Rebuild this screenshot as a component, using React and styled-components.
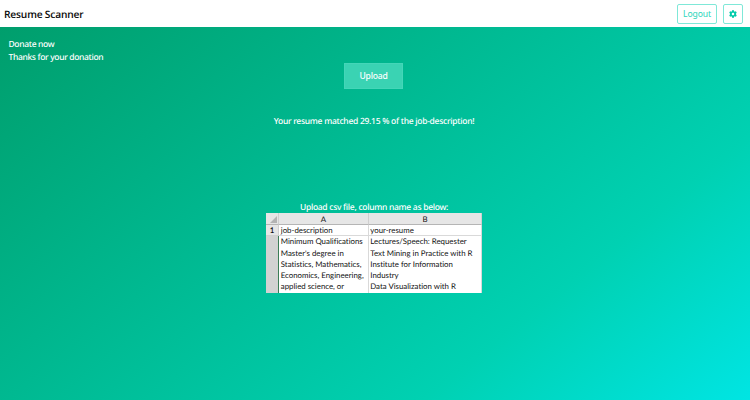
import React from "react";
import styled, { createGlobalStyle } from "styled-components";
import { FaCog } from "react-icons/fa";

const GlobalStyle = createGlobalStyle`
  * { box-sizing: border-box; }
  html, body { margin: 0; overflow: hidden; }
  body {
    font-family: "Noto Sans", "Open Sans", sans-serif;
    text-rendering: geometricPrecision;
  }
`;

const Page = styled.div`
  display: flex;
  flex-direction: column;
  width: 750px;
  height: 400px;
`;

const Navbar = styled.header`
  display: flex;
  align-items: center;
  justify-content: space-between;
  height: 27px;
  padding: 0 7px 0 4px;
  background: #fff;
`;

const Brand = styled.h1`
  margin: 1px 0 0;
  font-family: "Open Sans", sans-serif;
  font-size: 10.2px;
  line-height: 14px;
  font-weight: 600;
  letter-spacing: -0.17px;
  color: #0a0a0a;
`;

const Actions = styled.div`
  display: flex;
  gap: 6px;
`;

const OutlineButton = styled.button`
  display: flex;
  align-items: center;
  justify-content: center;
  width: ${(p) => p.$width}px;
  height: 20px;
  padding: 0;
  border: 1px solid #7fe8d8;
  border-radius: 2px;
  background: #fff;
  color: #2dd5bb;
  font: 400 8.6px/12px "Noto Sans", sans-serif;
  letter-spacing: -0.1px;
`;

const Hero = styled.main`
  flex: 1;
  display: flex;
  flex-direction: column;
  align-items: center;
  padding: 12px 2px 0 0;
  background: linear-gradient(141deg, #009e6c 0%, #00d1b2 73%, #00e5e3 100%);
  color: #fff;
`;

const Donation = styled.div`
  align-self: flex-start;
  margin: 0 0 -1px 8.5px;
`;

const Text = styled.p`
  margin: 0;
  font-size: 8.5px;
  font-weight: 500;
  line-height: 12.6px;
  letter-spacing: ${(p) => p.$tracking ?? -0.34}px;
  white-space: nowrap;
`;

const UploadButton = styled.button`
  width: 59px;
  height: 26px;
  margin: 0 1px 27px 0;
  padding: 0;
  border: 1px solid #44d6b8;
  background: #3ad3b3;
  color: #fff;
  font: 500 8.6px/12px "Noto Sans", sans-serif;
  letter-spacing: -0.24px;
`;

const Sample = styled.section`
  display: flex;
  flex-direction: column;
  align-items: center;
  margin-top: 73px;
`;

const Sheet = styled.div`
  display: grid;
  grid-template-columns: 13.5px 89.5px 113.5px;
  grid-template-rows: 12px 11px 57px;
  width: 216.5px;
  margin-top: -1px;
  background: #fff;
  color: #111;
  font-family: Lato, sans-serif;
  font-size: 7.85px;
  line-height: 11.6px;
  font-variant-ligatures: none;
`;

const HeaderCell = styled.div`
  display: flex;
  align-items: center;
  justify-content: center;
  padding-top: 1px;
  background: #e6e6e6;
  border-right: 1px solid #cfcfcf;
  border-bottom: 1px solid #b5b5b5;
`;

const Corner = styled(HeaderCell)`
  align-items: flex-end;
  justify-content: flex-end;
  padding: 0 1px 1px 0;
`;

const RowNumber = styled(HeaderCell)`
  font-weight: 600;
  border-bottom-color: #cfcfcf;
`;

const SelectedRow = styled.div`
  background: #d2d2d2;
  border-right: 1px solid #3c7d57;
`;

const Cell = styled.div`
  padding-left: 1.5px;
  white-space: nowrap;
  border-right: 1px solid #d9d9d9;
  border-bottom: ${(p) => (p.$last ? "0" : "1px solid #d9d9d9")};
`;

const Line = styled.div`
  height: 11.15px;
`;

const requirements = [
  "Minimum Qualifications",
  "Master's degree in",
  "Statistics, Mathematics,",
  "Economics, Engineering,",
  "applied science, or",
];

const experience = [
  "Lectures/Speech: Requester",
  "Text Mining in Practice with R",
  "Institute for Information",
  "Industry",
  "Data Visualization with R",
];

export default function App() {
  return (
    <Page>
      <GlobalStyle />
      <Navbar>
        <Brand>Resume Scanner</Brand>
        <Actions>
          <OutlineButton $width={40}>Logout</OutlineButton>
          <OutlineButton $width={20} aria-label="Settings">
            <FaCog size={8} color="#00cbaa" />
          </OutlineButton>
        </Actions>
      </Navbar>
      <Hero>
        <Donation>
          <Text>Donate now</Text>
          <Text>Thanks for your donation</Text>
        </Donation>
        <UploadButton>Upload</UploadButton>
        <Text $tracking={-0.28}>Your resume matched 29.15 % of the job-description!</Text>
        <Sample>
          <Text $tracking={-0.29}>Upload csv file, column name as below:</Text>
          <Sheet>
            <Corner>
              <svg width="7" height="7" viewBox="0 0 7 7">
                <path d="M7 0V7H0Z" fill="#b3b3b3" />
              </svg>
            </Corner>
            <HeaderCell>A</HeaderCell>
            <HeaderCell>B</HeaderCell>
            <RowNumber>1</RowNumber>
            <Cell>job-description</Cell>
            <Cell>your-resume</Cell>
            <SelectedRow />
            <Cell $last>
              {requirements.map((t) => <Line key={t}>{t}</Line>)}
            </Cell>
            <Cell $last>
              {experience.map((t) => <Line key={t}>{t}</Line>)}
            </Cell>
          </Sheet>
        </Sample>
      </Hero>
    </Page>
  );
}
